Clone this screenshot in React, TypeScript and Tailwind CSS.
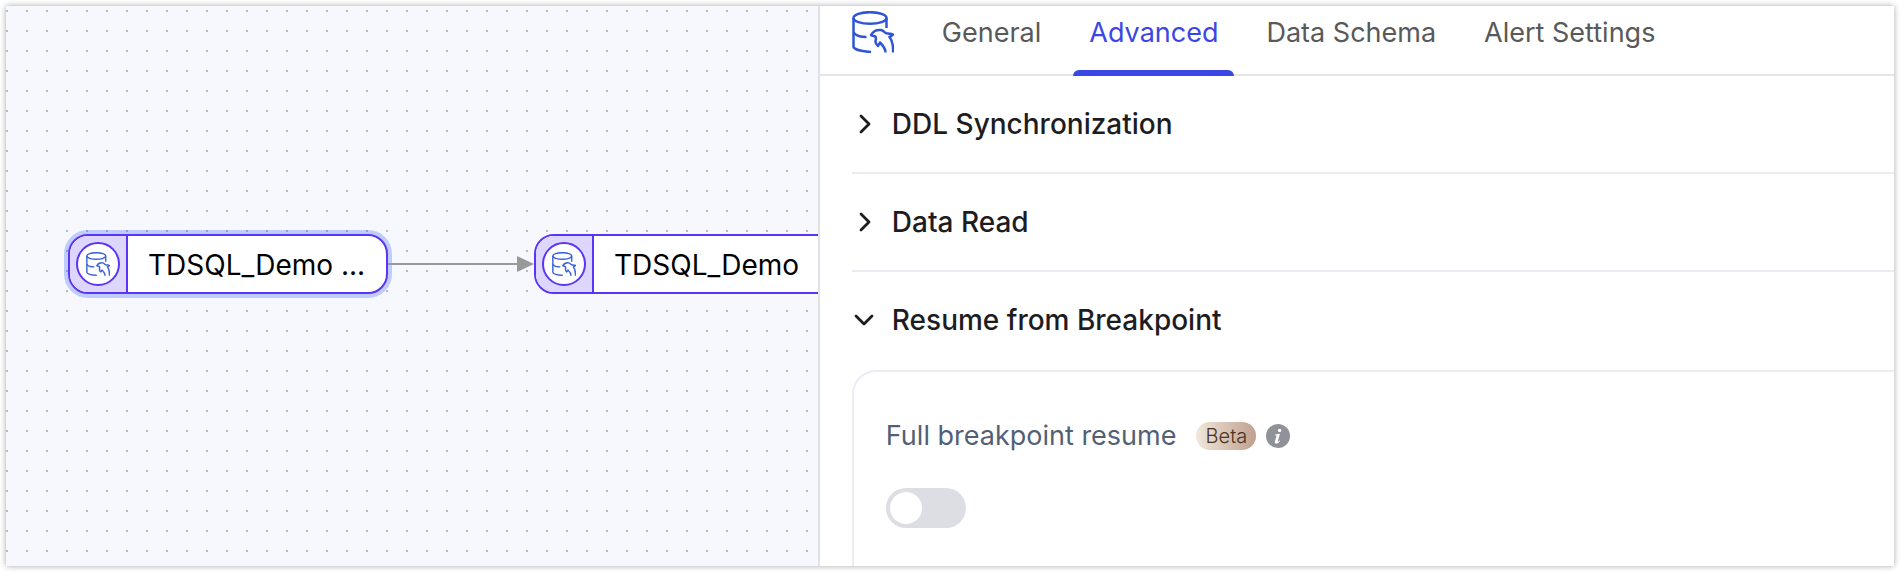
import { useState } from "react";

const tabs = ["General", "Advanced", "Data Schema", "Alert Settings"];

function DatabaseIcon({ className }: { className: string }) {
  return (
    <svg
      viewBox="0 0 42 42"
      fill="none"
      stroke="currentColor"
      strokeWidth="2.5"
      strokeLinecap="butt"
      strokeLinejoin="round"
      className={className}
      aria-hidden="true"
    >
      <ellipse cx="18" cy="7" rx="16.5" ry="5.800" />
      <path d="M1.500 7v28.500c0 2.500 7 4.800 17.500 5.500" />
      <path d="M34.500 7v10" />
      <path d="M1.500 21.500c2 3 7 4.500 13 4.500" />
      <path d="M33.500 41.500c0-4-2.500-7-5.500-10l-2 3.500c-2.500-2-3.200-4-2-7l-.5-2.500c-1.500-.8-3-.2-4.500-1.500 2-3.500 6-5.500 10-5 2.500.3 3 2.500 5.500 3.300 2.500.7 4.500.2 6.500 1.200-.5 1.500-2.500 1.500-3.500 2.500 3 4 4 8.500 3.500 15.500" />
    </svg>
  );
}

function Chevron({ open }: { open: boolean }) {
  return (
    <svg
      viewBox="0 0 24 24"
      fill="none"
      stroke="currentColor"
      strokeWidth="2.8"
      strokeLinecap="round"
      strokeLinejoin="round"
      className="size-6 shrink-0"
      aria-hidden="true"
    >
      <path d={open ? "M4 8l8 8 8-8" : "M9 4l8 8-8 8"} />
    </svg>
  );
}

function FlowNode({ name, selected }: { name: string; selected?: boolean }) {
  return (
    <div
      className={
        selected
          ? "flex h-15 w-80 rounded-[20px] border-2 border-[#5b34f5] bg-white ring-4 ring-[#2c5cff]/28"
          : "flex h-15 w-80 rounded-[20px] border-2 border-[#5b34f5] bg-white"
      }
    >
      <div className="flex w-[58px] shrink-0 items-center justify-center rounded-l-[18px] border-r-2 border-[#5b34f5] bg-[#ddd6fe]">
        <div className="flex size-11 items-center justify-center rounded-full border-2 border-[#5b34f5] bg-white">
          <DatabaseIcon className="size-6 text-[#3a63dc]" />
        </div>
      </div>
      <span className="truncate px-5 text-[28px] leading-[58px] text-black">{name}</span>
    </div>
  );
}

function SectionHeader({
  title,
  open,
  onToggle,
}: {
  title: string;
  open: boolean;
  onToggle: () => void;
}) {
  return (
    <button
      type="button"
      aria-expanded={open}
      onClick={onToggle}
      className="flex h-24 w-full items-center gap-4 text-left text-[28px] font-medium text-[#1d1d1f]"
    >
      <Chevron open={open} />
      {title}
    </button>
  );
}

export default function App() {
  const [activeTab, setActiveTab] = useState("Advanced");
  const [openSection, setOpenSection] = useState("Resume from Breakpoint");

  const toggle = (title: string) =>
    setOpenSection(openSection === title ? "" : title);

  return (
    <div className="flex min-h-screen bg-white p-1.5 font-['Inter','Liberation_Sans',sans-serif]">
      <main className="flex flex-1 overflow-hidden shadow-[0_0_6px_rgba(0,0,0,0.35)]">
        {/* Canvas */}
        <section className="relative flex-1 overflow-hidden bg-[#f7f8fe] bg-[conic-gradient(from_270deg_at_2px_2px,#b9babe_90deg,transparent_0)] bg-[length:20px_20px] bg-[position:0_4px]">
          <div className="absolute top-[228px] left-[62px]">
            <FlowNode name="TDSQL_Demo ..." selected />
          </div>
          <svg
            viewBox="0 0 146 16"
            className="absolute top-[250px] left-[382px] h-4 w-[146px]"
            aria-hidden="true"
          >
            <path d="M0 8h130" stroke="#999999" strokeWidth="2" />
            <path d="M129 0l17 8-17 8z" fill="#999999" />
          </svg>
          <div className="absolute top-[228px] left-[528px]">
            <FlowNode name="TDSQL_Demo" />
          </div>
        </section>

        {/* Settings panel */}
        <aside className="flex w-[57%] flex-col border-l-2 border-[#dfe1e8] bg-white">
          <header className="flex h-[70px] items-start border-b-2 border-[#e5e6eb] pl-8">
            <DatabaseIcon className="mt-[5px] mr-8 size-[42px] shrink-0 text-[#2f55d4]" />
            <div role="tablist" className="flex gap-4">
              {tabs.map((tab) => (
                <button
                  key={tab}
                  type="button"
                  role="tab"
                  aria-selected={tab === activeTab}
                  onClick={() => setActiveTab(tab)}
                  className={
                    tab === activeTab
                      ? "relative h-[70px] px-4 pb-4 text-[27px] whitespace-nowrap text-[#3b47e5] after:absolute after:inset-x-0 after:bottom-0 after:h-1.5 after:rounded-t-md after:bg-[#3b47e5]"
                      : "relative h-[70px] px-4 pb-4 text-[27px] whitespace-nowrap text-[#595959]"
                  }
                >
                  {tab}
                </button>
              ))}
            </div>
          </header>

          <div className="flex flex-1 flex-col pl-8">
            <div className="border-b-2 border-[#ebecf2]">
              <SectionHeader
                title="DDL Synchronization"
                open={openSection === "DDL Synchronization"}
                onToggle={() => toggle("DDL Synchronization")}
              />
            </div>
            <div className="border-b-2 border-[#ebecf2]">
              <SectionHeader
                title="Data Read"
                open={openSection === "Data Read"}
                onToggle={() => toggle("Data Read")}
              />
            </div>
            <SectionHeader
              title="Resume from Breakpoint"
              open={openSection === "Resume from Breakpoint"}
              onToggle={() => toggle("Resume from Breakpoint")}
            />

            {openSection === "Resume from Breakpoint" && (
              <div className="mt-0.5 flex-1 rounded-tl-3xl border-t-2 border-l-2 border-[#ebedf6] px-8 pt-11 pb-8">
                <div className="flex h-10 items-center">
                  <label htmlFor="full-resume" className="text-[27px] text-[#535f75]">
                    Full breakpoint resume
                  </label>
                  <span className="ml-5 flex h-7 w-15 items-center justify-center rounded-full bg-linear-to-r from-[#f1e8dc] to-[#bfa08f] text-xl font-light text-[#4a3420]">
                    Beta
                  </span>
                  <svg viewBox="0 0 24 24" className="ml-2.5 size-6" aria-hidden="true">
                    <circle cx="12" cy="12" r="12" fill="#909299" />
                    <circle cx="13.600" cy="6.400" r="1.700" fill="#fff" />
                    <path
                      d="M9 10.600l5-.8-2.200 7.400c-.2.800.5.700 1.800-.7l.5.5c-1.500 2-3 2.700-4.200 2.500-1.300-.2-1.300-1.200-1-2.300l1.500-5c.2-.8-.2-1-1.500-1z"
                      fill="#fff"
                    />
                  </svg>
                </div>
                <input
                  id="full-resume"
                  type="checkbox"
                  role="switch"
                  className="mt-8 block h-10 w-20 appearance-none rounded-full bg-[#dddee4] p-1 before:block before:size-8 before:rounded-full before:bg-white checked:bg-[#3b47e5] checked:before:translate-x-10"
                />
              </div>
            )}
          </div>
        </aside>
      </main>
    </div>
  );
}
